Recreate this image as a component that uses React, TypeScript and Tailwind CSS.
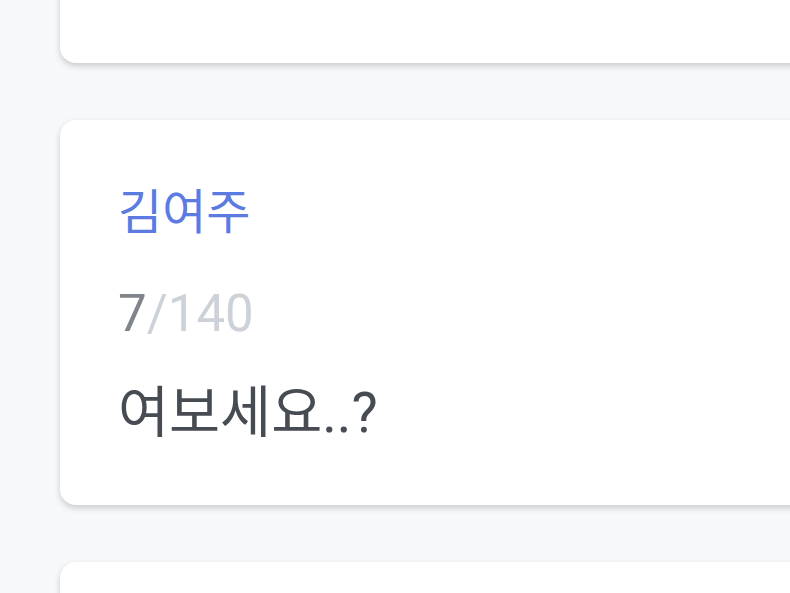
const messages = [
  { name: "김여주", text: "여보세요..?" },
  { name: "김여주", text: "여보세요..?" },
  { name: "김여주", text: "여보세요..?" },
];

const Card = ({ name, text }: { name: string; text: string }) => {
  return (
    <div className="w-[780px] rounded-[16px] bg-white px-[58px] pt-[57px] pb-[55px] shadow-[0_3px_6px_rgba(0,0,0,0.18)]">
      <p className="text-[48px] leading-[72px] text-[#5b7be0]">{name}</p>
      <p className="mt-[35px] text-[51px] leading-[60px]">
        <span className="text-[#80858b]">{text.length}</span>
        <span className="text-[#cdd2d8]">/140</span>
      </p>
      <p className="mt-[34px] text-[55.5px] leading-[72px] text-[#474c53]">{text}</p>
    </div>
  );
};

export default function App() {
  return (
    <div
      className="h-[593px] overflow-hidden bg-[#f7f8fa] pl-[60px]"
      style={{ fontFamily: "Roboto, 'Noto Sans CJK KR', sans-serif" }}
    >
      <div className="-mt-[322px] flex flex-col gap-[57px]">
        {messages.map((m, i) => (
          <Card key={i} name={m.name} text={m.text} />
        ))}
      </div>
    </div>
  );
}
